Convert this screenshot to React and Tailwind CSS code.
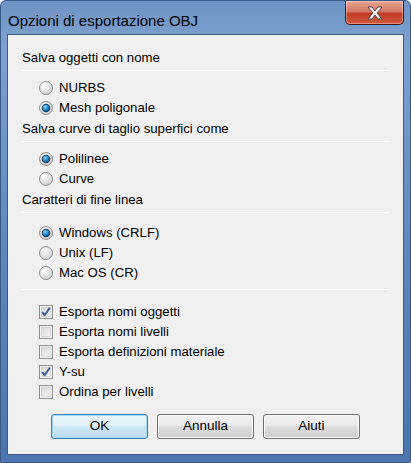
import React from 'react';

const Radio = ({ checked }) => (
  <svg width="14" height="14" viewBox="0 0 14 14" className="shrink-0">
    <defs>
      <radialGradient id="rbg" cx="0.35" cy="0.3" r="0.8">
        <stop offset="0" stopColor="#ffffff" />
        <stop offset="1" stopColor="#cbcbcb" />
      </radialGradient>
      <radialGradient id="rdot" cx="0.4" cy="0.35" r="0.7">
        <stop offset="0" stopColor="#8fd3f7" />
        <stop offset="0.6" stopColor="#1f7fc0" />
        <stop offset="1" stopColor="#0d4a7a" />
      </radialGradient>
    </defs>
    <circle cx="7" cy="7" r="6.5" fill="url(#rbg)" stroke="#8e8f8f" strokeWidth="1" />
    {checked && (
      <>
        <circle cx="7" cy="7" r="4.3" fill="#1b3f5e" />
        <circle cx="7" cy="7" r="3.5" fill="url(#rdot)" />
      </>
    )}
  </svg>
);

const Check = ({ checked }) => (
  <svg width="14" height="14" viewBox="0 0 14 14" className="shrink-0">
    <defs>
      <linearGradient id="cbg" x1="0" y1="0" x2="1" y2="1">
        <stop offset="0" stopColor="#d6d6d6" />
        <stop offset="1" stopColor="#f8f8f8" />
      </linearGradient>
    </defs>
    <rect x="0.5" y="0.5" width="13" height="13" fill="#f4f4f4" stroke="#8e8f8f" />
    <rect x="2.5" y="2.5" width="9" height="9" fill="url(#cbg)" stroke="#c4c4c4" strokeWidth="0.6" />
    {checked && (
      <path d="M3.2 7 L5.6 10.2 L10.8 2.8" fill="none" stroke="#3c5a9a" strokeWidth="2" strokeLinejoin="round" />
    )}
  </svg>
);

const Section = ({ title }) => (
  <div className="flex flex-col">
    <div className="h-[16px] leading-[16px]">{title}</div>
    <div className="h-px bg-[#a0a0a0] mt-[4px] border-b border-white" />
  </div>
);

const Row = ({ children, label }) => (
  <div className="flex items-center gap-[6px] h-[20px] pl-[17px]">
    {children}
    <span>{label}</span>
  </div>
);

const Btn = ({ children, primary }) => (
  <button
    className={
      'w-[97px] h-[25px] rounded-[3px] border text-[13.5px] text-black ' +
      (primary
        ? 'border-[#3c7fb1] shadow-[inset_0_0_0_1px_#9fd9f6] bg-[linear-gradient(#eaf6fd_0%,#e3f1fa_45%,#cfe6f5_50%,#bcdcf0_100%)]'
        : 'border-[#707070] shadow-[inset_0_0_0_1px_#fbfbfb] bg-[linear-gradient(#f2f2f2_0%,#ebebeb_45%,#dddddd_50%,#cfcfcf_100%)]')
    }
  >
    {children}
  </button>
);

export default function App() {
  return (
    <div
      className="w-[411px] h-[463px] flex flex-col border border-[#3a5a85] rounded-t-[6px] bg-[linear-gradient(180deg,#6f93c4_0%,#7da1cf_10%,#5c84bb_60%,#4a75b0_100%)]"
      style={{ fontFamily: '"Liberation Sans", Arial, sans-serif' }}
    >
      <div className="h-[33px] flex items-start justify-between pl-[7px]">
        <div className="mt-[11px] text-[15px] leading-[17px] text-black">Opzioni di esportazione OBJ</div>
        <div className="mr-[6px] w-[59px] h-[24px] rounded-b-[5px] border border-t-0 border-[#3c1a1a] bg-[linear-gradient(180deg,#e8a493_0%,#d47a66_45%,#c13a24_55%,#cf5b3e_100%)] flex items-center justify-center shadow-[inset_0_0_0_1px_rgba(255,255,255,0.35)]">
          <svg width="18" height="16" viewBox="0 0 18 16">
            <path
              d="M2 2 H6 L9 6 L12 2 H16 L11 8 L16 14 H12 L9 10 L6 14 H2 L7 8 Z"
              fill="#ffffff"
              stroke="#4a4a4a"
              strokeWidth="1"
              strokeLinejoin="round"
            />
          </svg>
        </div>
      </div>
      <div className="mx-[6px] mb-[7px] flex-1 border border-[#42587a] bg-[#f0f0f0] text-[13.2px] text-black px-[14px] pt-[15px]">
        <Section title="Salva oggetti con nome" />
        <div className="mt-[7px]">
          <Row label="NURBS"><Radio /></Row>
          <Row label="Mesh poligonale"><Radio checked /></Row>
        </div>
        <div className="mt-[3px]">
          <Section title="Salva curve di taglio superfici come" />
        </div>
        <div className="mt-[7px]">
          <Row label="Polilinee"><Radio checked /></Row>
          <Row label="Curve"><Radio /></Row>
        </div>
        <div className="mt-[3px]">
          <Section title="Caratteri di fine linea" />
        </div>
        <div className="mt-[10px]">
          <Row label="Windows (CRLF)"><Radio checked /></Row>
          <Row label="Unix (LF)"><Radio /></Row>
          <Row label="Mac OS (CR)"><Radio /></Row>
        </div>
        <div className="h-px bg-[#a0a0a0] mt-[6px] border-b border-white" />
        <div className="mt-[12px] flex flex-col">
          <Row label="Esporta nomi oggetti"><Check checked /></Row>
          <Row label="Esporta nomi livelli"><Check /></Row>
          <Row label="Esporta definizioni materiale"><Check /></Row>
          <Row label="Y-su"><Check checked /></Row>
          <Row label="Ordina per livelli"><Check /></Row>
        </div>
        <div className="flex gap-[9px] pl-[29px] mt-[12px]">
          <Btn primary>OK</Btn>
          <Btn>Annulla</Btn>
          <Btn>Aiuti</Btn>
        </div>
      </div>
    </div>
  );
}
